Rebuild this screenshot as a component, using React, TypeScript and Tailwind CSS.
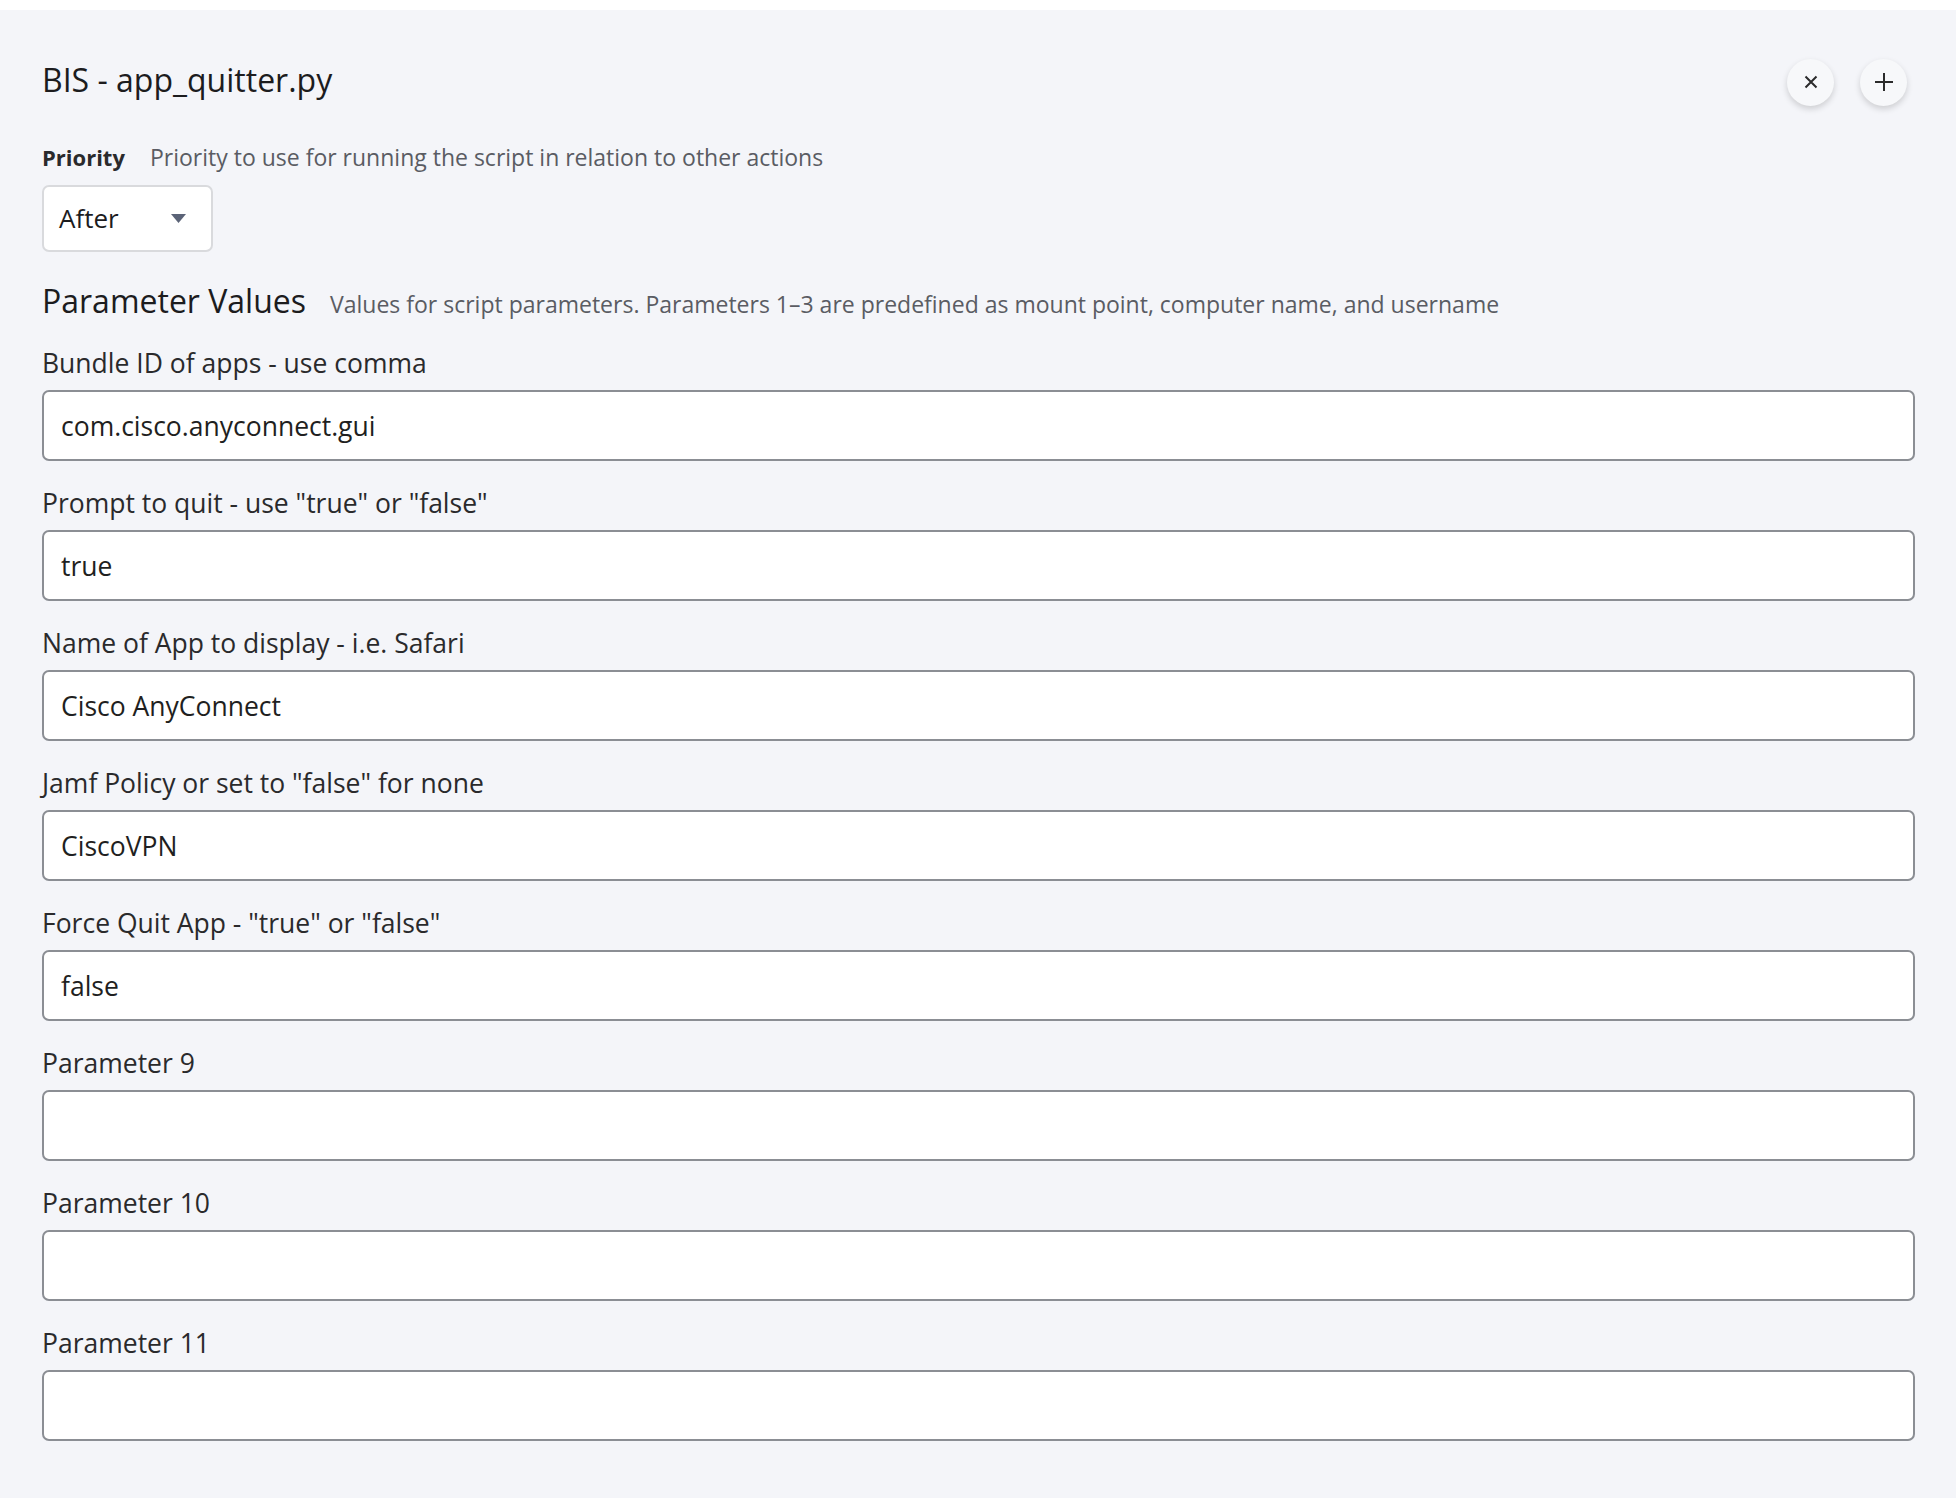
import React from 'react';

const fields = [
  { label: 'Bundle ID of apps - use comma', value: 'com.cisco.anyconnect.gui' },
  { label: 'Prompt to quit - use "true" or "false"', value: 'true' },
  { label: 'Name of App to display - i.e. Safari', value: 'Cisco AnyConnect' },
  { label: 'Jamf Policy or set to "false" for none', value: 'CiscoVPN' },
  { label: 'Force Quit App - "true" or "false"', value: 'false' },
  { label: 'Parameter 9', value: '' },
  { label: 'Parameter 10', value: '' },
  { label: 'Parameter 11', value: '' },
];

const CircleButton: React.FC<{ children: React.ReactNode; label: string }> = ({ children, label }) => (
  <button
    aria-label={label}
    className="w-[47px] h-[47px] rounded-full bg-[#f7f8fa] flex items-center justify-center shadow-[0_3px_6px_rgba(0,0,0,0.16)] text-[#2b2b2b]"
  >
    {children}
  </button>
);

export default function App() {
  return (
    <div className="min-h-screen bg-white py-[10px] font-['Open_Sans',sans-serif]">
      <div className="bg-[#f4f5f9] pl-[42px] pr-[41px] pt-[48px] pb-[57px]">
        {/* header */}
        <div className="flex items-center justify-between h-[44px]">
          <h1 className="text-[32px] leading-[44px] text-[#1c1c1e]">BIS - app_quitter.py</h1>
          <div className="flex items-center gap-[26px] mr-[8px] mt-[4px]">
            <CircleButton label="Remove">
              <svg width="16" height="16" viewBox="0 0 16 16" fill="none" stroke="currentColor" strokeWidth="2">
                <path d="M2.5 2.5l11 11M13.5 2.5l-11 11" />
              </svg>
            </CircleButton>
            <CircleButton label="Add">
              <svg width="20" height="20" viewBox="0 0 20 20" fill="none" stroke="currentColor" strokeWidth="2">
                <path d="M10 1v18M1 10h18" />
              </svg>
            </CircleButton>
          </div>
        </div>

        {/* priority */}
        <div className="mt-[40px] flex items-baseline gap-[25px] leading-[30px]">
          <span className="text-[22px] font-bold text-[#2a2a2c]">Priority</span>
          <span className="text-[23px] text-[#5a5c63]">Priority to use for running the script in relation to other actions</span>
        </div>
        <div className="mt-[13px] w-[171px] h-[67px] bg-white border-2 border-[#d9dadd] rounded-[7px] flex items-center justify-between pl-[15px] pr-[25px]">
          <span className="text-[26px] text-[#1c1c1e]">After</span>
          <svg width="15" height="9" viewBox="0 0 15 9">
            <path d="M0 0h15L7.5 9z" fill="#5b6377" />
          </svg>
        </div>

        {/* parameter values */}
        <div className="mt-[31px] flex items-baseline gap-[24px] leading-[36px]">
          <h2 className="text-[32px] text-[#1c1c1e]">Parameter Values</h2>
          <span className="text-[23px] text-[#5a5c63]">
            Values for script parameters. Parameters 1–3 are predefined as mount point, computer name, and username
          </span>
        </div>

        <div className="mt-[24px] flex flex-col gap-[25px]">
          {fields.map((f) => (
            <div key={f.label}>
              <label className="block text-[26.5px] leading-[34px] text-[#2a2a2c]">{f.label}</label>
              <input
                readOnly
                value={f.value}
                className="mt-[10px] block w-full h-[71px] bg-white border-2 border-[#8b8e94] rounded-[7px] px-[17px] text-[26.5px] text-[#1f1f21] outline-none font-['Open_Sans',sans-serif]"
              />
            </div>
          ))}
        </div>
      </div>
    </div>
  );
}
